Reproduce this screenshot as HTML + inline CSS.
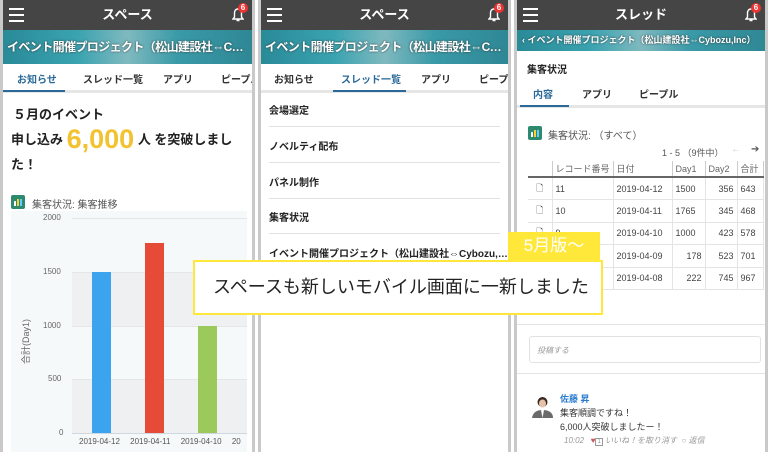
<!DOCTYPE html>
<html><head><meta charset="utf-8"><style>
*{margin:0;padding:0;box-sizing:border-box}
body{width:768px;height:452px;overflow:hidden;background:#fff;font-family:"Liberation Sans","Noto Sans CJK JP",sans-serif;position:relative;color:#222}
.a{position:absolute}
.ph{position:absolute;top:0;height:452px;border:3px solid #c9c9c9;border-bottom:none;border-top:none;background:#fff;overflow:hidden}
.top{position:absolute;left:0;right:0;top:0;height:30px;background:#454545;color:#fff;font-weight:bold;font-size:13px;text-align:center;line-height:30px}
.burger{position:absolute;left:6px;top:8px;width:15px;height:14px;border-top:2px solid #fff;border-bottom:2px solid #fff}
.burger:after{content:"";position:absolute;left:0;right:0;top:4px;height:2px;background:#fff}
.bell{position:absolute;right:8px;top:8px;width:12px;height:14px}
.badge{position:absolute;right:4px;top:3px;width:10px;height:10px;border-radius:50%;background:#e33;color:#fff;font-size:8px;line-height:10px;text-align:center}
.ban{position:absolute;left:0;right:0;top:30px;background:linear-gradient(90deg,#2a8a98,#3aa3b0 30%,#7fb9bf 50%,#3a9aa8 70%,#2f8794);color:#fff;font-weight:bold;text-shadow:0 0 2px #333;overflow:hidden;text-overflow:ellipsis;white-space:nowrap}
.tabs{position:absolute;left:0;right:0;font-size:10px;font-weight:bold;color:#333;border-bottom:3px solid #e6e6e6;white-space:nowrap;overflow:hidden}
.tabs span{position:absolute;white-space:nowrap}
.sel{color:#2b6a98}
.ul{position:absolute;height:2px;background:#2b6a98}
.it{position:absolute;left:8px;font-size:10px;font-weight:bold}
.sep{position:absolute;left:8px;right:8px;height:1px;background:#e2e2e2}
.ico{position:absolute;width:14px;height:14px;border-radius:2px;background:#2e8a6e}
.ico:after{content:"";position:absolute;left:3px;top:4px;width:8px;height:7px;background:linear-gradient(90deg,#fff 0 2px,transparent 2px 3px,#fc3 3px 5px,transparent 5px 6px,#6cf 6px 8px);clip-path:polygon(0 30%,25% 30%,25% 0,100% 0,100% 100%,0 100%)}
td{font-size:9px;color:#444;height:22.5px;border-bottom:1px solid #e4e4e4;border-right:1px solid #e4e4e4;padding:0 3px;white-space:nowrap}
th{font-size:9px;color:#666;font-weight:normal;height:16px;border-bottom:2px solid #666;border-right:1px solid #ccc;text-align:left;padding:0 3px}
.r{text-align:right}
</style></head><body>

<!-- panel 1 -->
<div class="ph" style="left:0;width:255px">
<div class="top"><div class="burger"></div>スペース<svg class="bell" viewBox="0 0 12 14"><path d="M6 1C3.5 1 2.5 3 2.5 5v4L1 11h10L9.5 9V5C9.5 3 8.5 1 6 1zM4.5 12.5h3" fill="none" stroke="#fff" stroke-width="1.4"/></svg><div class="badge">6</div></div>
<div class="ban" style="height:34px;font-size:12px;line-height:34px;padding:0 4px;letter-spacing:-0.6px">イベント開催プロジェクト（松山建設社⇔Cybozu,Inc）</div>
<div class="tabs" style="top:64px;height:29px"><span class="sel" style="left:14px;top:7px">お知らせ</span><span style="left:80px;top:7px">スレッド一覧</span><span style="left:160px;top:7px">アプリ</span><span style="left:218px;top:7px">ピープル</span></div>
<div class="ul" style="left:0;width:62px;top:90px"></div>
<div class="a" style="left:10px;top:104px;font-size:13px;font-weight:bold">５月のイベント</div>
<div class="a" style="left:8px;top:124px;font-size:13px;font-weight:bold;white-space:nowrap">申し込み <span style="color:#f3c230;font-size:27px;vertical-align:-4px">6,000</span> 人 を突破しまし</div>
<div class="a" style="left:8px;top:154px;font-size:13px;font-weight:bold">た！</div>
<div class="ico" style="left:8px;top:195px"></div>
<div class="a" style="left:29px;top:196px;font-size:10px;color:#555">集客状況: 集客推移</div>
<div class="a" style="left:8px;top:211px;width:236px;height:241px;background:#f6f9fa"></div>
<div class="a" style="left:69px;top:272px;width:175px;height:54px;background:#eef0f2"></div>
<div class="a" style="left:69px;top:379px;width:175px;height:54px;background:#eef0f2"></div>
<div class="a" style="left:69px;top:218px;width:175px;height:1px;background:#e4e6e8"></div>
<div class="a" style="left:69px;top:272px;width:175px;height:1px;background:#e4e6e8"></div>
<div class="a" style="left:69px;top:326px;width:175px;height:1px;background:#e4e6e8"></div>
<div class="a" style="left:69px;top:379px;width:175px;height:1px;background:#e4e6e8"></div>
<div class="a" style="left:69px;top:433px;width:175px;height:1px;background:#cfd8e0"></div>
<div class="a" style="left:40px;top:213px;font-size:8px;color:#666">2000</div>
<div class="a" style="left:40px;top:267px;font-size:8px;color:#666">1500</div>
<div class="a" style="left:40px;top:321px;font-size:8px;color:#666">1000</div>
<div class="a" style="left:45px;top:374px;font-size:8px;color:#666">500</div>
<div class="a" style="left:56px;top:428px;font-size:8px;color:#666">0</div>
<div class="a" style="left:0px;top:335px;font-size:9px;color:#666;transform:rotate(-90deg);white-space:nowrap">合計(Day1)</div>
<div class="a" style="left:89px;top:272px;width:19px;height:161px;background:#3ca3ef"></div>
<div class="a" style="left:142px;top:243px;width:19px;height:190px;background:#e64b38"></div>
<div class="a" style="left:195px;top:326px;width:19px;height:107px;background:#9bc95b"></div>
<div class="a" style="left:76px;top:437px;font-size:8px;color:#555;white-space:nowrap;word-spacing:8px">2019-04-12 2019-04-11 2019-04-10 20</div>
</div>

<!-- panel 2 -->
<div class="ph" style="left:258px;width:253px">
<div class="top"><div class="burger"></div>スペース<svg class="bell" viewBox="0 0 12 14"><path d="M6 1C3.5 1 2.5 3 2.5 5v4L1 11h10L9.5 9V5C9.5 3 8.5 1 6 1zM4.5 12.5h3" fill="none" stroke="#fff" stroke-width="1.4"/></svg><div class="badge">6</div></div>
<div class="ban" style="height:34px;font-size:12px;line-height:34px;padding:0 4px;letter-spacing:-0.6px">イベント開催プロジェクト（松山建設社⇔Cybozu,Inc）</div>
<div class="tabs" style="top:64px;height:29px"><span style="left:13px;top:7px">お知らせ</span><span class="sel" style="left:80px;top:7px">スレッド一覧</span><span style="left:160px;top:7px">アプリ</span><span style="left:218px;top:7px">ピープル</span></div>
<div class="ul" style="left:72px;width:73px;top:90px"></div>
<div class="it" style="top:102px">会場選定</div><div class="sep" style="top:126px"></div>
<div class="it" style="top:138px">ノベルティ配布</div><div class="sep" style="top:162px"></div>
<div class="it" style="top:174px">パネル制作</div><div class="sep" style="top:198px"></div>
<div class="it" style="top:209px">集客状況</div><div class="sep" style="top:233px"></div>
<div class="it" style="top:245px;white-space:nowrap">イベント開催プロジェクト（松山建設社⇔Cybozu,…</div>
</div>

<!-- panel 3 -->
<div class="ph" style="left:514px;width:254px">
<div class="top"><div class="burger"></div>スレッド<svg class="bell" viewBox="0 0 12 14"><path d="M6 1C3.5 1 2.5 3 2.5 5v4L1 11h10L9.5 9V5C9.5 3 8.5 1 6 1zM4.5 12.5h3" fill="none" stroke="#fff" stroke-width="1.4"/></svg><div class="badge">6</div></div>
<div class="ban" style="height:21px;font-size:9px;line-height:21px;padding-left:5px">‹ イベント開催プロジェクト（松山建設社⇔Cybozu,Inc）</div>
<div class="a" style="left:10px;top:61px;font-size:10px;font-weight:bold">集客状況</div>
<div class="tabs" style="top:80px;height:28px"><span class="sel" style="left:16px;top:6px">内容</span><span style="left:65px;top:6px">アプリ</span><span style="left:122px;top:6px">ピープル</span></div>
<div class="ul" style="left:3px;width:49px;top:105px"></div>
<div class="ico" style="left:11px;top:126px"></div>
<div class="a" style="left:31px;top:127px;font-size:10px;color:#555">集客状況: （すべて）</div>
<div class="a" style="left:145px;top:146px;font-size:9px;color:#555">1 - 5 （9件中）</div>
<div class="a" style="left:214px;top:144px;font-size:10px;color:#ccc">←</div>
<div class="a" style="left:234px;top:144px;font-size:10px;color:#555">➔</div>
<table class="a" style="left:11px;top:161px;width:236px;border-collapse:collapse">
<tr><th style="width:24px"></th><th style="width:61px">レコード番号</th><th style="width:59px">日付</th><th style="width:33px">Day1</th><th style="width:32px">Day2</th><th>合計</th></tr>
<tr><td style="text-align:center">🗋</td><td>11</td><td>2019-04-12</td><td>1500</td><td class="r">356</td><td>643</td></tr>
<tr><td style="text-align:center">🗋</td><td>10</td><td>2019-04-11</td><td>1765</td><td class="r">345</td><td>468</td></tr>
<tr><td style="text-align:center">🗋</td><td>9</td><td>2019-04-10</td><td>1000</td><td class="r">423</td><td>578</td></tr>
<tr><td></td><td></td><td>2019-04-09</td><td class="r">178</td><td class="r">523</td><td>701</td></tr>
<tr><td></td><td></td><td>2019-04-08</td><td class="r">222</td><td class="r">745</td><td>967</td></tr>
</table>
<div class="a" style="left:0;right:0;top:324px;height:1px;background:#e4e4e4"></div>
<div class="a" style="left:12px;top:336px;width:232px;height:27px;border:1px solid #e2e2e2;border-radius:3px;font-size:8px;font-style:italic;color:#999;padding:8px 7px">投稿する</div>
<div class="a" style="left:0;right:0;top:373px;height:1px;background:#e4e4e4"></div>
<svg class="a" style="left:14px;top:394px" width="23" height="24" viewBox="0 0 23 24"><circle cx="11.5" cy="8" r="5" fill="#3a2a22"/><ellipse cx="11.5" cy="9.5" rx="3.5" ry="4" fill="#e6c3a8"/><path d="M1 24c1-6 5-8 10.5-8S22 18 22 24z" fill="#6a6a6a"/><path d="M10 16l1.5 8 1.5-8z" fill="#fff"/></svg>
<div class="a" style="left:43px;top:392px;font-size:9px;font-weight:bold;color:#2a7ccd">佐藤 昇</div>
<div class="a" style="left:43px;top:406px;font-size:9px;color:#333">集客順調ですね！</div>
<div class="a" style="left:43px;top:420px;font-size:9px;color:#333">6,000人突破しましたー！</div>
<div class="a" style="left:47px;top:435px;font-size:8px;color:#999;font-style:italic;white-space:nowrap">10:02 &nbsp;&nbsp;<span style="color:#c55;font-style:normal">♥</span><span style="border:1px solid #999;font-size:6px;padding:0 1px;font-style:normal">1</span> いいね！を取り消す &nbsp;○ 返信</div>
</div>

<!-- overlay -->
<div class="a" style="left:508px;top:232px;width:92px;height:28px;background:#ffe83a;color:#fff;font-size:17px;line-height:28px;text-align:center">5月版〜</div>
<div class="a" style="left:193px;top:260px;width:410px;height:55px;background:#fff;border:2px solid #ffe83a;font-size:18px;line-height:51px;padding-left:18px;color:#222;white-space:nowrap">スペースも新しいモバイル画面に一新しました</div>
</body></html>
